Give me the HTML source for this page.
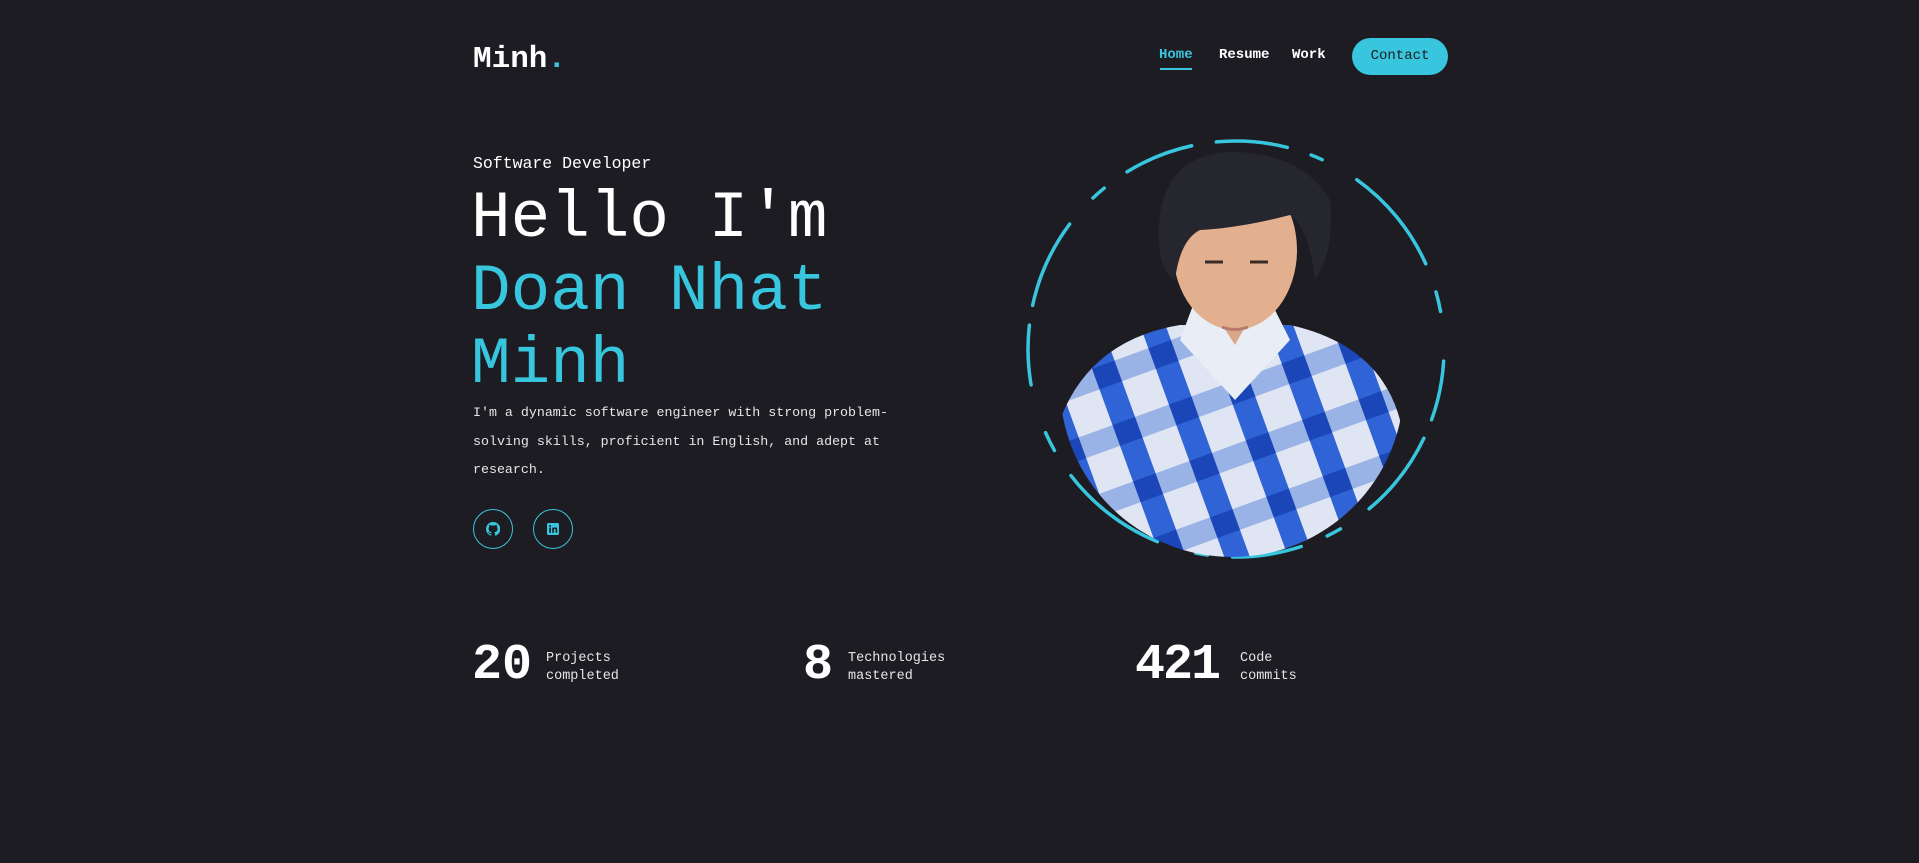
<!DOCTYPE html>
<html><head><meta charset="utf-8"><style>
*{margin:0;padding:0;box-sizing:border-box}
body{width:1919px;height:863px;background:#1d1c22;color:#fff;font-family:"Liberation Mono",monospace;position:relative;overflow:hidden}
.a{position:absolute;white-space:nowrap}
.acc{color:#38c5de}
</style></head><body>
<div class="a" style="left:473px;top:42px;font-size:31px;font-weight:bold">Minh<span class="acc">.</span></div>
<div class="a acc" style="left:1159px;top:47px;font-size:14px;font-weight:bold">Home</div>
<div class="a" style="left:1160px;top:68px;width:32px;height:2px;background:#38c5de"></div>
<div class="a" style="left:1219px;top:47px;font-size:14px;font-weight:bold">Resume</div>
<div class="a" style="left:1292px;top:47px;font-size:14px;font-weight:bold">Work</div>
<div class="a" style="left:1352px;top:38px;width:96px;height:37px;border-radius:19px;background:#38c5de;color:#1d1c22;font-size:14px;line-height:37px;text-align:center">Contact</div>

<div class="a" style="left:473px;top:154px;font-size:16.5px">Software Developer</div>
<div class="a" style="left:471px;top:182px;font-size:66px;line-height:73px">Hello I'm<br><span class="acc">Doan Nhat<br>Minh</span></div>
<div class="a" style="left:473px;top:399px;font-size:13.3px;line-height:28.5px;color:#e6e6e6">I'm a dynamic software engineer with strong problem-<br>solving skills, proficient in English, and adept at<br>research.</div>
<div class="a" style="left:473px;top:509px;width:40px;height:40px;border:1px solid #38c5de;border-radius:50%"></div>
<svg class="a" style="left:486px;top:522px" width="14" height="14" viewBox="0 0 16 16"><path fill="#38c5de" d="M8 0a8 8 0 0 0-2.5 15.6c.4 0 .5-.2.5-.4v-1.4c-2.200.5-2.700-1-2.700-1-.4-.9-.9-1.200-.9-1.200-.7-.5.1-.5.1-.5.8.1 1.200.8 1.200.8.7 1.300 1.900.9 2.400.7 0-.5.3-.9.5-1.100-1.800-.2-3.600-.9-3.600-4 0-.9.3-1.600.8-2.100-.1-.2-.4-1 .1-2.100 0 0 .7-.2 2.200.8a7.600 7.600 0 0 1 4 0c1.500-1 2.200-.8 2.200-.8.4 1.100.2 1.900.1 2.100.5.6.8 1.300.8 2.100 0 3.100-1.900 3.800-3.600 4 .3.3.6.8.6 1.500v2.200c0 .2.1.5.6.4A8 8 0 0 0 8 0z"/></svg>
<div class="a" style="left:533px;top:509px;width:40px;height:40px;border:1px solid #38c5de;border-radius:50%"></div>
<svg class="a" style="left:547px;top:523px" width="12" height="12" viewBox="0 0 16 16"><rect width="16" height="16" rx="2" fill="#38c5de"/><rect x="3" y="6" width="2.2" height="7" fill="#1d1c22"/><circle cx="4.1" cy="3.8" r="1.3" fill="#1d1c22"/><path d="M7 6h2v1c.5-.8 1.3-1.2 2.3-1.2 1.6 0 2.4 1 2.4 3V13h-2.2V9.3c0-.9-.3-1.5-1.1-1.5S9.2 8.4 9.2 9.3V13H7z" fill="#1d1c22"/></svg>

<svg class="a" style="left:0;top:0" width="1919" height="863">
<defs>
<clipPath id="c"><circle cx="1232" cy="385" r="172"/></clipPath>
<pattern id="p" width="60" height="60" patternUnits="userSpaceOnUse" patternTransform="rotate(-20)">
<rect width="60" height="60" fill="#dfe5f2"/><rect x="0" width="24" height="60" fill="#2f63d6"/><rect y="0" width="60" height="22" fill="#7d9fe3" opacity=".7"/><rect x="0" y="0" width="24" height="22" fill="#1a46b8"/></pattern>
</defs>
<circle cx="1236" cy="349" r="208" fill="none" stroke="#38c5de" stroke-width="3.5" stroke-linecap="round" stroke-dasharray="70 25 12 40 110 30 20 50 60 20 90 35 15 28" transform="rotate(-95 1236 349)"/>
<g clip-path="url(#c)">
<path d="M1060 420 Q1090 340 1180 325 L1290 325 Q1380 345 1400 420 L1400 600 L1060 600Z" fill="url(#p)"/>
</g>
<path d="M1195 300 L1270 300 L1290 340 L1235 400 L1180 340Z" fill="#e9eef6"/>
<path d="M1200 290 L1265 290 L1235 345Z" fill="#d9a888"/>
<ellipse cx="1235" cy="250" rx="62" ry="80" fill="#e2b08f"/>
<path d="M1160 255 Q1150 160 1225 152 Q1300 150 1330 200 Q1335 250 1315 280 Q1308 225 1290 215 Q1240 228 1200 230 Q1180 240 1175 280 Q1165 275 1160 255Z" fill="#26262e"/>
<path d="M1205 262 h18 M1250 262 h18" stroke="#3a2a25" stroke-width="3"/>
<path d="M1222 327 q13 5 26 0" stroke="#b87a6a" stroke-width="3" fill="none"/>
</svg>

<div class="a" style="left:472px;top:636px;font-size:50px;font-weight:bold;line-height:60px">20</div>
<div class="a" style="left:546px;top:650px;font-size:13.5px;line-height:18px;color:#e6e6e6">Projects<br>completed</div>
<div class="a" style="left:803px;top:636px;font-size:50px;font-weight:bold;line-height:60px">8</div>
<div class="a" style="left:848px;top:650px;font-size:13.5px;line-height:18px;color:#e6e6e6">Technologies<br>mastered</div>
<div class="a" style="left:1135px;top:636px;font-size:50px;font-weight:bold;line-height:60px;letter-spacing:-2px">421</div>
<div class="a" style="left:1240px;top:650px;font-size:13.5px;line-height:18px;color:#e6e6e6">Code<br>commits</div>
</body></html>
